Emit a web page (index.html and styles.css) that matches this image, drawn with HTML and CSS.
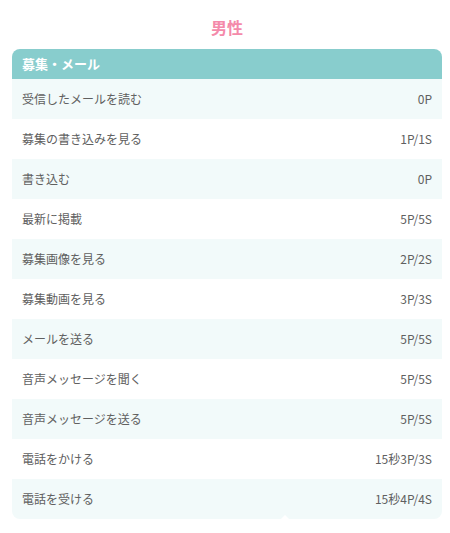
FILE: index.html
```html
<!DOCTYPE html>
<html lang="ja">
<head>
<meta charset="utf-8">
<link rel="stylesheet" href="styles.css">
</head>
<body>
<h2 class="title">男性</h2>
<div class="card">
  <div class="card-head">募集・メール</div>
  <div class="row alt"><span>受信したメールを読む</span><span>0P</span></div>
  <div class="row"><span>募集の書き込みを見る</span><span>1P/1S</span></div>
  <div class="row alt"><span>書き込む</span><span>0P</span></div>
  <div class="row"><span>最新に掲載</span><span>5P/5S</span></div>
  <div class="row alt"><span>募集画像を見る</span><span>2P/2S</span></div>
  <div class="row"><span>募集動画を見る</span><span>3P/3S</span></div>
  <div class="row alt"><span>メールを送る</span><span>5P/5S</span></div>
  <div class="row"><span>音声メッセージを聞く</span><span>5P/5S</span></div>
  <div class="row alt"><span>音声メッセージを送る</span><span>5P/5S</span></div>
  <div class="row"><span>電話をかける</span><span>15秒3P/3S</span></div>
  <div class="row alt last"><span>電話を受ける</span><span>15秒4P/4S</span></div>
  <div class="notch"></div>
</div>
</body>
</html>
```
FILE: styles.css
```css
html, body {
  margin: 0;
  padding: 0;
  background: #fff;
}
body {
  font-family: "Noto Sans CJK JP", "Noto Sans", sans-serif;
  color: #555;
  padding: 0 8px 0 12px;
}
.title {
  margin: 0;
  padding-top: 16px;
  height: 49px;
  box-sizing: border-box;
  text-align: center;
  font-size: 16px;
  line-height: 22px;
  font-weight: bold;
  color: #f48aaa;
}
.card {
  position: relative;
  width: 430px;
  border-radius: 8px;
  overflow: hidden;
}
.card-head {
  height: 30px;
  background: #88cdcd;
  color: #fff;
  font-weight: bold;
  font-size: 13px;
  line-height: 29px;
  padding: 0 10px;
}
.row {
  height: 40px;
  display: flex;
  align-items: center;
  justify-content: space-between;
  padding: 0 10px 1px;
  box-sizing: border-box;
  font-size: 12px;
  color: #606060;
  background: #fff;
}
.row.alt {
  background: #f2fafa;
}
.notch {
  position: absolute;
  left: 269px;
  bottom: 0;
  width: 0;
  height: 0;
  border-left: 4px solid transparent;
  border-right: 4px solid transparent;
  border-bottom: 4px solid #fff;
}
```
